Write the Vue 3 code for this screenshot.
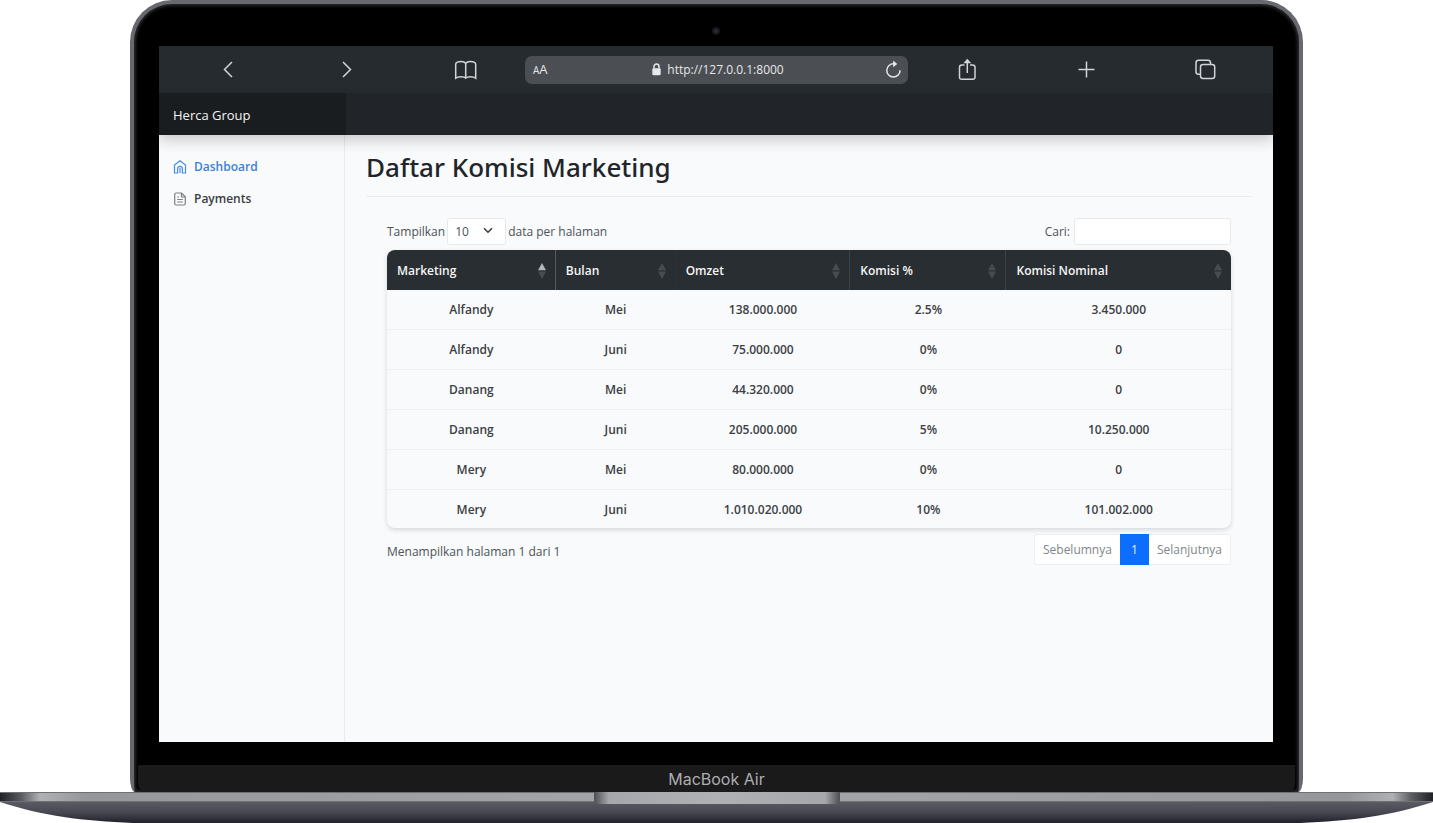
<script setup>
import { ref } from 'vue'

const columns = [
  { label: 'Marketing', key: 'marketing', sorted: true },
  { label: 'Bulan', key: 'bulan' },
  { label: 'Omzet', key: 'omzet' },
  { label: 'Komisi %', key: 'persen' },
  { label: 'Komisi Nominal', key: 'nominal' },
]

const rows = [
  { marketing: 'Alfandy', bulan: 'Mei', omzet: '138.000.000', persen: '2.5%', nominal: '3.450.000' },
  { marketing: 'Alfandy', bulan: 'Juni', omzet: '75.000.000', persen: '0%', nominal: '0' },
  { marketing: 'Danang', bulan: 'Mei', omzet: '44.320.000', persen: '0%', nominal: '0' },
  { marketing: 'Danang', bulan: 'Juni', omzet: '205.000.000', persen: '5%', nominal: '10.250.000' },
  { marketing: 'Mery', bulan: 'Mei', omzet: '80.000.000', persen: '0%', nominal: '0' },
  { marketing: 'Mery', bulan: 'Juni', omzet: '1.010.020.000', persen: '10%', nominal: '101.002.000' },
]

const pageSize = ref('10')
const query = ref('')
</script>

<template>
  <div class="page">
    <div class="lid">
      <div class="bezel-top"><span class="camera"></span></div>

      <div class="screen">
        <div class="toolbar">
          <button class="tool" aria-label="Back">
            <svg width="24" height="24" viewBox="0 0 24 24"><path d="M16 4 8.500 11.500l7.500 7.500" /></svg>
          </button>
          <button class="tool" aria-label="Forward">
            <svg width="24" height="24" viewBox="0 0 24 24"><path d="M8 4 15.500 11.500 8 19" /></svg>
          </button>
          <button class="tool" aria-label="Bookmarks">
            <svg width="24" height="24" viewBox="0 0 24 24">
              <path d="M11.700 5.300C10.700 4 9.300 3.500 7.300 3.500 4 3.500 1.700 4.400 1.700 6.300v13.800C2.900 19.100 4.800 18.700 6.800 18.700c2.200 0 3.900.3 4.900 1.400 1-1.100 2.700-1.400 4.900-1.400 2 0 3.900.4 5.100 1.400V6.300c0-1.900-2.300-2.800-5.600-2.800-2 0-3.400.5-4.400 1.800zV20" />
            </svg>
          </button>
          <div class="address">
            <span class="reader"><small>A</small>A</span>
            <span class="url">
              <svg width="9" height="13" viewBox="0 0 9 13">
                <rect class="fill" x="0.300" y="5.200" width="8.400" height="7" rx="1.200" />
                <path d="M2 5.500V3.500a2.500 2.500 0 0 1 5 0v2" />
              </svg>
              http://127.0.0.1:8000
            </span>
            <button class="reload" aria-label="Reload">
              <svg width="18" height="20" viewBox="0 0 18 20">
                <path d="M15 10.200A6.600 6.600 0 1 1 9 3.900" />
                <path class="fill" d="M8.200 .4 12.200 4 8.200 7.200z" />
              </svg>
            </button>
          </div>
          <button class="tool" aria-label="Share">
            <svg width="24" height="24" viewBox="0 0 24 24">
              <path d="M8.500 7H5.800c-1.500 0-2.300.8-2.300 2.300V19C3.500 20.500 4.300 21.300 5.800 21.300h10.900c1.500 0 2.300-.8 2.300-2.300V9.300c0-1.500-.8-2.300-2.300-2.300H14M11.300 15V3" />
              <path class="fill" d="M11.300 .8 15.300 5.300H7.300z" />
            </svg>
          </button>
          <button class="tool" aria-label="New tab">
            <svg width="24" height="24" viewBox="0 0 24 24"><path d="M11.500 3.500v16M3.500 11.500h16" /></svg>
          </button>
          <button class="tool" aria-label="Tabs">
            <svg width="24" height="24" viewBox="0 0 24 24">
              <rect x="6.500" y="6.500" width="14.200" height="14" rx="2.500" />
              <path d="M6.500 16.300H4.500c-1.500 0-2.500-.8-2.500-2.500V4.800c0-1.700.8-2.500 2.500-2.500h9.500c1.700 0 2.500.8 2.500 2.500v1.700" />
            </svg>
          </button>
        </div>

        <header class="navbar"><a class="brand" href="#">Herca Group</a></header>

        <div class="content">
          <nav class="sidebar">
            <a class="link active" href="#">
              <svg width="14" height="14" viewBox="0 0 14 14">
                <path d="M1.500 5 7 .8 12.500 5v8H9.400V8.800c0-1.700-1-2.500-2.400-2.500s-2.400.8-2.400 2.500V13H1.500z M7 8v5" />
              </svg>
              Dashboard
            </a>
            <a class="link" href="#">
              <svg width="14" height="14" viewBox="0 0 14 14">
                <path d="M8.500 1H3.200C2.200 1 1.700 1.500 1.700 2.500v9c0 1 .5 1.500 1.500 1.500h7.600c1 0 1.500-.5 1.500-1.500V4.800zV5h3.800M4.200 5h1.800M4.200 7.500h5.600M4.200 10h5.600" />
              </svg>
              Payments
            </a>
          </nav>

          <main class="main">
            <h1>Daftar Komisi Marketing</h1>

            <section class="panel">
              <div class="controls">
                <div class="control length">
                  <label for="page-size">Tampilkan</label>
                  <span class="select-box">
                    <select id="page-size" v-model="pageSize">
                      <option>10</option>
                      <option>25</option>
                      <option>50</option>
                    </select>
                    <svg width="10" height="7" viewBox="0 0 10 7"><path d="M1 1.200 5 5.200l4-4" /></svg>
                  </span>
                  <label for="page-size">data per halaman</label>
                </div>
                <div class="control">
                  <label for="search">Cari:</label>
                  <input id="search" v-model="query" type="search" />
                </div>
              </div>

              <table>
                <colgroup>
                  <col v-for="c in columns" :key="c.key" :class="'col-' + c.key" />
                </colgroup>
                <thead>
                  <tr>
                    <th v-for="c in columns" :key="c.key" scope="col" :class="'head-' + c.key">
                      <div class="head">
                        {{ c.label }}
                        <svg width="8" height="16" viewBox="0 0 8 16" :class="{ sorted: c.sorted }">
                          <path class="up" d="M4 0 8 7.300H0z" />
                          <path class="down" d="M4 16 8 8.500H0z" />
                        </svg>
                      </div>
                    </th>
                  </tr>
                </thead>
                <tbody>
                  <tr v-for="(r, i) in rows" :key="i">
                    <td v-for="c in columns" :key="c.key">{{ r[c.key] }}</td>
                  </tr>
                </tbody>
              </table>

              <div class="footer">
                <span class="info">Menampilkan halaman 1 dari 1</span>
                <div class="pager">
                  <button>Sebelumnya</button>
                  <button class="current">1</button>
                  <button>Selanjutnya</button>
                </div>
              </div>
            </section>
          </main>
        </div>
      </div>

      <div class="bezel-bottom"></div>
      <div class="chin">MacBook Air</div>
    </div>

    <svg class="base" viewBox="0 0 1433 31" preserveAspectRatio="none">
      <defs>
        <linearGradient id="deck" x1="0" x2="1" y1="0" y2="0">
          <stop offset="0" stop-color="#202126" />
          <stop offset=".015" stop-color="#5c5d62" />
          <stop offset=".028" stop-color="#b0b1b5" />
          <stop offset=".06" stop-color="#96979b" />
          <stop offset=".5" stop-color="#a6a7ab" />
          <stop offset=".94" stop-color="#96979b" />
          <stop offset=".972" stop-color="#b0b1b5" />
          <stop offset=".985" stop-color="#5c5d62" />
          <stop offset="1" stop-color="#202126" />
        </linearGradient>
        <linearGradient id="under" x1="0" x2="0" y1="0" y2="1">
          <stop offset="0" stop-color="#5d5e66" />
          <stop offset=".55" stop-color="#464750" />
          <stop offset="1" stop-color="#20202c" />
        </linearGradient>
        <linearGradient id="notch" x1="0" x2="1" y1="0" y2="0">
          <stop offset="0" stop-color="#4c4d52" />
          <stop offset=".06" stop-color="#a6a7ac" />
          <stop offset=".5" stop-color="#b0b1b5" />
          <stop offset=".94" stop-color="#a6a7ac" />
          <stop offset="1" stop-color="#4c4d52" />
        </linearGradient>
      </defs>
      <path fill="url(#under)" d="M0 8H1433V10C1390 24 1350 29 1300 31H133C83 29 43 24 0 10z" />
      <path fill="url(#deck)" d="M0 0H1433V9H0z" />
      <path fill="#6f7076" d="M0 0H1433V1H0zM0 9H1433V10H0z" />
      <path fill="url(#notch)" d="M594 0H840V8Q840 12 834 12H600Q594 12 594 8z" />
    </svg>
  </div>
</template>

<style>
body {
  margin: 0;
  background: #fff;
}
</style>

<style scoped>
.page {
  min-height: 100vh;
  display: flex;
  flex-direction: column;
  font-family: 'Open Sans', 'Noto Sans', sans-serif;
  font-size: 12px;
  line-height: 18px;
  color: #212529;
}
.page *,
.page *::before {
  box-sizing: border-box;
}
button,
input,
select {
  font: inherit;
  color: inherit;
  margin: 0;
}
button {
  background: none;
  border: 0;
  padding: 0;
}
a {
  text-decoration: none;
}

.lid {
  flex: 1;
  display: flex;
  flex-direction: column;
  margin: 0 130px;
  padding: 0 26px 0 25px;
  border: 4px solid #68696f;
  border-bottom: 0;
  border-radius: 42px 42px 5px 5px / 42px 42px 14px 14px;
  background: #000;
  box-shadow: inset 0 0 3px 2px #26272a;
}
.bezel-top {
  height: 42px;
  display: flex;
  justify-content: center;
  align-items: center;
}
.camera {
  width: 8px;
  height: 8px;
  margin-top: 12px;
  border: 2px solid #17171b;
  border-radius: 50%;
  background: #2b2b33;
}
.bezel-bottom {
  height: 23px;
}
.chin {
  height: 27px;
  margin: 0 -22px 0 -21px;
  border-radius: 0 0 8px 8px;
  background: #1a1a1a;
  color: #adadb1;
  text-align: center;
  font-family: Inter, sans-serif;
  font-size: 16px;
  line-height: 28px;
}
.base {
  display: block;
  width: 100%;
  height: 31px;
}

.screen {
  flex: 1;
  display: flex;
  flex-direction: column;
  background: #f8fafc;
}
.toolbar {
  height: 47px;
  padding: 0 8px 0 9px;
  display: grid;
  grid-template-columns: repeat(3, 1fr) 383px repeat(3, 1fr);
  align-items: center;
  background: #262b2f;
  color: #d2d4d6;
}
.tool {
  display: flex;
  justify-content: center;
}
.toolbar svg {
  fill: none;
  stroke: currentColor;
  stroke-width: 1.5;
}
.toolbar .fill {
  fill: currentColor;
  stroke: none;
}
.address {
  height: 28px;
  padding: 0 5px 0 8px;
  display: grid;
  grid-template-columns: 1fr auto 1fr;
  align-items: center;
  border-radius: 7px;
  background: #4b4e53;
  color: #e6e7e8;
}
.reader {
  font-size: 13px;
}
.reader small {
  font-size: 10px;
}
.url {
  display: flex;
  align-items: center;
  gap: 6px;
}
.reload {
  justify-self: end;
  display: flex;
}

.navbar {
  position: relative;
  height: 42px;
  display: flex;
  background: #212529;
  box-shadow: 0 6px 14px rgba(0, 0, 0, 0.18);
}
.brand {
  width: 187px;
  padding-left: 14px;
  background: #191d20;
  color: #f4f4f4;
  font-size: 13px;
  line-height: 45px;
}
.content {
  flex: 1;
  display: flex;
}
.sidebar {
  width: 186px;
  padding: 16px 14px;
  border-right: 1px solid #e9ebed;
}
.link {
  height: 32px;
  display: flex;
  align-items: center;
  gap: 7px;
  color: #3b3d40;
  font-weight: 600;
}
.link svg {
  fill: none;
  stroke: #7d7f81;
  stroke-width: 1.2;
}
.link.active {
  color: #3c7fe0;
}
.link.active svg {
  stroke: #4a8bea;
}

.main {
  flex: 1;
  padding: 13px 21px;
}
h1 {
  margin: 0;
  padding-bottom: 9px;
  border-bottom: 1px solid #eaecee;
  font-family: 'Noto Sans', sans-serif;
  font-size: 26px;
  font-weight: 500;
  line-height: 39px;
}
.panel {
  padding: 21px;
}
.controls {
  display: flex;
  justify-content: space-between;
  color: #4e5256;
}
.control {
  display: flex;
  align-items: center;
  gap: 4px;
}
.length {
  gap: 2px;
}
.control label {
  padding-top: 1px;
}
.select-box {
  position: relative;
  display: flex;
}
select {
  width: 59px;
  height: 27px;
  padding: 0 7px;
  appearance: none;
  border: 1px solid #e6e8ea;
  border-radius: 3px;
  background: #fff;
}
.select-box svg {
  position: absolute;
  right: 13px;
  top: 9px;
  fill: none;
  stroke: #343a40;
  stroke-width: 1.5;
  pointer-events: none;
}
input {
  width: 157px;
  height: 27px;
  padding: 0 8px;
  border: 1px solid #e6e8ea;
  border-radius: 3px;
  background: #fff;
}

table {
  width: 100%;
  height: 278px;
  margin-top: 5px;
  table-layout: fixed;
  border-collapse: separate;
  border-spacing: 0;
  border-radius: 8px;
  overflow: hidden;
  box-shadow: 0 2px 5px rgba(0, 0, 0, 0.14);
}
.col-marketing {
  width: 20%;
}
.col-bulan {
  width: 14.2%;
}
.col-omzet {
  width: 20.7%;
}
.col-persen {
  width: 18.5%;
}
thead tr {
  height: 40px;
}
th {
  padding: 1px 9px 0 10px;
  border-right: 1px solid #3d4247;
  background: #292e33;
  color: #f5f5f5;
  font-weight: 600;
  text-align: left;
}
.head-marketing {
  border-right-color: #565a5e;
}
.head-bulan {
  border-right-color: #2d3236;
}
.head-nominal {
  border-right: 0;
}
.head {
  display: flex;
  align-items: center;
  justify-content: space-between;
}
.head svg {
  fill: #484c50;
}
.sorted .up {
  fill: #b4b6b8;
}
td {
  padding: 1px 0 0;
  border-bottom: 1px solid #eef0f2;
  color: #3c4044;
  font-weight: 600;
  text-align: center;
}
tbody tr:last-child td {
  border-bottom: 0;
}

.footer {
  margin-top: 6px;
  display: flex;
  justify-content: space-between;
  align-items: flex-start;
  color: #4e5256;
}
.info {
  padding-top: 9px;
}
.pager {
  display: flex;
}
.pager button {
  height: 31px;
  padding: 0 8px;
  border: 1px solid #eceef0;
  background: #fff;
  color: #80868b;
}
.pager button:first-child {
  border-right: 0;
  border-radius: 3px 0 0 3px;
}
.pager button:last-child {
  border-left: 0;
  border-radius: 0 3px 3px 0;
}
.pager .current {
  width: 29px;
  border-color: #0d6efd;
  background: #0d6efd;
  color: #e4f0ff;
}
</style>
